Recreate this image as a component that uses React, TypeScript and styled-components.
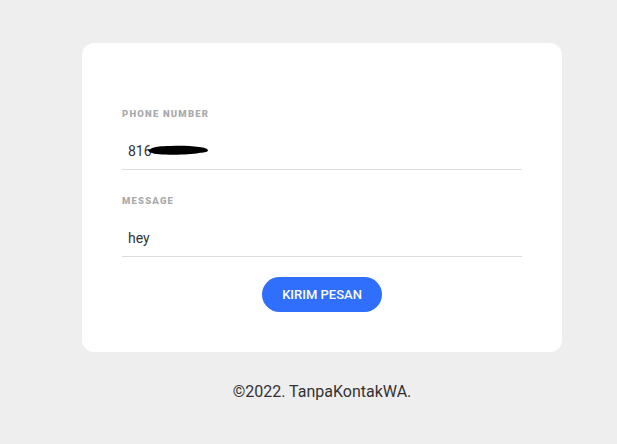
import React, { useState } from 'react';
import styled, { createGlobalStyle } from 'styled-components';

const GlobalStyle = createGlobalStyle`
  html, body {
    margin: 0;
    padding: 0;
    background: #eeeeee;
    font-family: Roboto, "Noto Sans", Arial, sans-serif;
  }
`;

const Page = styled.div`
  display: flex;
  flex-direction: column;
  align-items: center;
  padding: 43px 0 0 27px;
`;

const Card = styled.form`
  box-sizing: border-box;
  width: 480px;
  background: #ffffff;
  border-radius: 12px;
  padding: 65px 40px 40px;
  display: flex;
  flex-direction: column;
`;

const Field = styled.div<{ gapTop?: number }>`
  display: flex;
  flex-direction: column;
  margin-top: ${({ gapTop }) => gapTop || 0}px;
`;

const Label = styled.label`
  font-size: 9.5px;
  line-height: 12px;
  font-weight: 900;
  letter-spacing: 1.2px;
  color: #aaaaaa;
  text-transform: uppercase;
  margin-bottom: 11px;
`;

const InputRow = styled.div`
  position: relative;
  display: flex;
  align-items: center;
  height: 38px;
  border-bottom: 1px solid #dddddd;
`;

const Input = styled.input`
  box-sizing: border-box;
  width: 100%;
  height: 100%;
  border: none;
  outline: none;
  background: transparent;
  padding: 2px 6px 0;
  font-family: inherit;
  font-size: 14px;
  color: #333333;
`;

const Redaction = styled.svg`
  position: absolute;
  left: 25px;
  top: 14px;
  pointer-events: none;
`;

const Button = styled.button`
  align-self: center;
  margin-top: 20px;
  width: 120px;
  height: 35px;
  border: none;
  border-radius: 18px;
  background: #2f6ffb;
  color: #ffffff;
  font-family: inherit;
  font-size: 13px;
  font-weight: 500;
  cursor: pointer;
`;

const Footer = styled.div`
  margin-top: 30px;
  font-size: 16px;
  line-height: 20px;
  color: #333333;
`;

const App = () => {
  const [phone, setPhone] = useState('816');
  const [message, setMessage] = useState('hey');

  return (
    <>
      <GlobalStyle />
      <Page>
        <Card onSubmit={(e) => e.preventDefault()}>
          <Field>
            <Label>Phone Number</Label>
            <InputRow>
              <Input value={phone} onChange={(e) => setPhone(e.target.value)} />
              <Redaction width="62" height="11" viewBox="0 0 62 11">
                <path
                  d="M1 5.5 C6 1.5, 14 1, 24 1 C34 0.5, 44 1, 52 2 C57 2.5, 61 3.5, 61 5.5 C60 7.5, 56 7.5, 52 8 C44 9.5, 30 10, 18 9.5 C10 9.5, 3 8.5, 1 5.5 Z"
                  fill="#000000"
                />
              </Redaction>
            </InputRow>
          </Field>
          <Field gapTop={25}>
            <Label>Message</Label>
            <InputRow>
              <Input value={message} onChange={(e) => setMessage(e.target.value)} />
            </InputRow>
          </Field>
          <Button type="submit">KIRIM PESAN</Button>
        </Card>
        <Footer>©2022. TanpaKontakWA.</Footer>
      </Page>
    </>
  );
};

export default App;
